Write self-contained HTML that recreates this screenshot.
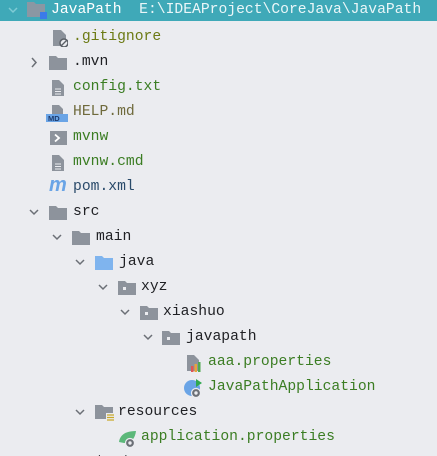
<!DOCTYPE html>
<html><head><style>
html,body{margin:0;width:437px;height:456px;overflow:hidden}
body{background:#ebecf0;position:relative;font-family:"Liberation Mono",monospace;font-size:14.7px}
.r{position:absolute;left:0;width:437px;height:25px;line-height:25px;white-space:pre}
.t{position:absolute;top:0}
.ch{position:absolute;top:0;width:10px;height:25px}
.ic{position:absolute;top:5px}
.g{color:#3b7d23}.d{color:#1f2024}
</style></head><body>
<div class="r" style="top:0;height:21px;line-height:21px;background:#3fa9b8;color:#fff">
 <svg class="ch" style="left:8px;height:21px" viewBox="0 0 10 21"><path d="M1 8l4 4 4-4" stroke="#7fcbd5" stroke-width="1.5" fill="none"/></svg>
 <svg style="position:absolute;left:27px;top:2px" width="20" height="17"><path d="M0 0h7l2 2h9v13H0z" fill="#8a97a3"/><rect x="13" y="10" width="7" height="7" fill="#3b7bea"/></svg>
 <span class="t" style="left:51px">JavaPath  <span style="color:#eaf6f8">E:\IDEAProject\CoreJava\JavaPath</span></span>
</div>

<div class="r" style="top:25px">
 <svg class="ic" style="left:52px;top:4px" width="16" height="18"><path d="M1 1h8l5 5v11H1z" fill="#8d939c"/><circle cx="12" cy="14" r="4" fill="#ebecf0" stroke="#5a5f66" stroke-width="1.5"/><path d="M9.5 16.5l5-5" stroke="#5a5f66" stroke-width="1.3"/></svg>
 <span class="t" style="left:73px;color:#6c7a14">.gitignore</span></div>

<div class="r" style="top:50px">
 <svg class="ch" style="left:29px" viewBox="0 0 10 25"><path d="M3 8l4 4.5-4 4.5" stroke="#6b6f76" stroke-width="1.5" fill="none"/></svg>
 <svg class="ic" style="left:49px;top:6px" width="18" height="14"><path d="M0 0h7l2 2h9v12H0z" fill="#8d939c"/></svg>
 <span class="t d" style="left:73px">.mvn</span></div>

<div class="r" style="top:75px">
 <svg class="ic" style="left:51px;top:4px" width="14" height="18"><path d="M1 1h7l5 5v11H1z" fill="#8d939c"/><path d="M4 10h6M4 12.5h6M4 15h6" stroke="#ebecf0" stroke-width="1"/></svg>
 <span class="t g" style="left:73px">config.txt</span></div>

<div class="r" style="top:100px">
 <svg class="ic" style="left:46px;top:4px" width="22" height="18"><path d="M6 1h7l4 4v5H6z" fill="#8d939c"/><rect x="0" y="10" width="22" height="8" fill="#6aa4e6"/><text x="2" y="17" font-size="7.5" font-family="Liberation Sans" font-weight="bold" fill="#1d3a6b">MD</text></svg>
 <span class="t" style="left:73px;color:#6f6a3c">HELP.md</span></div>

<div class="r" style="top:125px">
 <svg class="ic" style="left:50px;top:6px" width="17" height="14"><rect width="17" height="14" fill="#8d939c"/><path d="M5 3.5l4 3.5-4 3.5" stroke="#fff" stroke-width="1.8" fill="none"/></svg>
 <span class="t g" style="left:73px">mvnw</span></div>

<div class="r" style="top:150px">
 <svg class="ic" style="left:51px;top:4px" width="14" height="18"><path d="M1 1h7l5 5v11H1z" fill="#8d939c"/><path d="M4 10h6M4 12.5h6M4 15h6" stroke="#ebecf0" stroke-width="1"/></svg>
 <span class="t g" style="left:73px">mvnw.cmd</span></div>

<div class="r" style="top:175px">
 <span class="t" style="left:49px;color:#6aa4e6;font-family:'Liberation Sans',sans-serif;font-weight:bold;font-style:italic;font-size:20px;top:-2px">m</span>
 <span class="t" style="left:73px;color:#2a4a6a">pom.xml</span></div>

<div class="r" style="top:200px">
 <svg class="ch" style="left:29px" viewBox="0 0 10 25"><path d="M1 10l4 4 4-4" stroke="#6b6f76" stroke-width="1.5" fill="none"/></svg>
 <svg class="ic" style="left:49px;top:6px" width="18" height="14"><path d="M0 0h7l2 2h9v12H0z" fill="#8d939c"/></svg>
 <span class="t d" style="left:73px">src</span></div>

<div class="r" style="top:225px">
 <svg class="ch" style="left:52px" viewBox="0 0 10 25"><path d="M1 10l4 4 4-4" stroke="#6b6f76" stroke-width="1.5" fill="none"/></svg>
 <svg class="ic" style="left:72px;top:6px" width="18" height="14"><path d="M0 0h7l2 2h9v12H0z" fill="#8d939c"/></svg>
 <span class="t d" style="left:96px">main</span></div>

<div class="r" style="top:250px">
 <svg class="ch" style="left:75px" viewBox="0 0 10 25"><path d="M1 10l4 4 4-4" stroke="#6b6f76" stroke-width="1.5" fill="none"/></svg>
 <svg class="ic" style="left:95px;top:6px" width="18" height="14"><path d="M0 0h7l2 2h9v12H0z" fill="#7fb4ee"/></svg>
 <span class="t d" style="left:119px">java</span></div>

<div class="r" style="top:275px">
 <svg class="ch" style="left:98px" viewBox="0 0 10 25"><path d="M1 10l4 4 4-4" stroke="#6b6f76" stroke-width="1.5" fill="none"/></svg>
 <svg class="ic" style="left:118px;top:6px" width="18" height="14"><path d="M0 0h7l2 2h9v12H0z" fill="#8d939c"/><rect x="5" y="6" width="3" height="3" fill="#ebecf0"/></svg>
 <span class="t d" style="left:141px">xyz</span></div>

<div class="r" style="top:300px">
 <svg class="ch" style="left:120px" viewBox="0 0 10 25"><path d="M1 10l4 4 4-4" stroke="#6b6f76" stroke-width="1.5" fill="none"/></svg>
 <svg class="ic" style="left:140px;top:6px" width="18" height="14"><path d="M0 0h7l2 2h9v12H0z" fill="#8d939c"/><rect x="5" y="6" width="3" height="3" fill="#ebecf0"/></svg>
 <span class="t d" style="left:163px">xiashuo</span></div>

<div class="r" style="top:325px">
 <svg class="ch" style="left:143px" viewBox="0 0 10 25"><path d="M1 10l4 4 4-4" stroke="#6b6f76" stroke-width="1.5" fill="none"/></svg>
 <svg class="ic" style="left:162px;top:6px" width="18" height="14"><path d="M0 0h7l2 2h9v12H0z" fill="#8d939c"/><rect x="5" y="6" width="3" height="3" fill="#ebecf0"/></svg>
 <span class="t d" style="left:186px">javapath</span></div>

<div class="r" style="top:350px">
 <svg class="ic" style="left:186px;top:4px" width="16" height="18"><path d="M1 1h7l5 5v11H1z" fill="#8d939c"/><rect x="5" y="12" width="2.5" height="6" fill="#e05555"/><rect x="8.5" y="10" width="2.5" height="8" fill="#e8a33b"/><rect x="12" y="8" width="2.5" height="10" fill="#4fa84f"/></svg>
 <span class="t g" style="left:208px">aaa.properties</span></div>

<div class="r" style="top:375px">
 <svg class="ic" style="left:183px;top:3px" width="22" height="20"><circle cx="9" cy="10" r="8" fill="#6aa4e6"/><path d="M13 1v8l6-4z" fill="#2fa84f"/><circle cx="13" cy="15" r="4.5" fill="#6b6f76" stroke="#ebecf0" stroke-width="1.2"/><circle cx="13" cy="15" r="1.7" fill="#ebecf0"/></svg>
 <span class="t g" style="left:208px">JavaPathApplication</span></div>

<div class="r" style="top:400px">
 <svg class="ch" style="left:75px" viewBox="0 0 10 25"><path d="M1 10l4 4 4-4" stroke="#6b6f76" stroke-width="1.5" fill="none"/></svg>
 <svg class="ic" style="left:95px;top:5px" width="20" height="17"><path d="M0 0h7l2 2h9v12H0z" fill="#8d939c"/><rect x="11" y="8" width="9" height="9" fill="#ebecf0"/><path d="M12 10h7M12 12.5h7M12 15h7" stroke="#c9a92a" stroke-width="1.3"/></svg>
 <span class="t d" style="left:118px">resources</span></div>

<div class="r" style="top:425px">
 <svg class="ic" style="left:118px;top:4px" width="22" height="19"><path d="M1 13C2 5 9 2 18 2c-1 8-5 12-12 12z" fill="#5cb87a"/><circle cx="12" cy="14" r="4.5" fill="#6b6f76" stroke="#ebecf0" stroke-width="1.2"/><circle cx="12" cy="14" r="1.7" fill="#ebecf0"/></svg>
 <span class="t g" style="left:141px">application.properties</span></div>

<div class="r" style="top:450px">
 <svg class="ch" style="left:52px" viewBox="0 0 10 25"><path d="M3 8l4 4.5-4 4.5" stroke="#6b6f76" stroke-width="1.5" fill="none"/></svg>
 <svg class="ic" style="left:72px;top:6px" width="18" height="14"><path d="M0 0h7l2 2h9v12H0z" fill="#8d939c"/></svg>
 <span class="t d" style="left:96px">test</span></div>
</body></html>
